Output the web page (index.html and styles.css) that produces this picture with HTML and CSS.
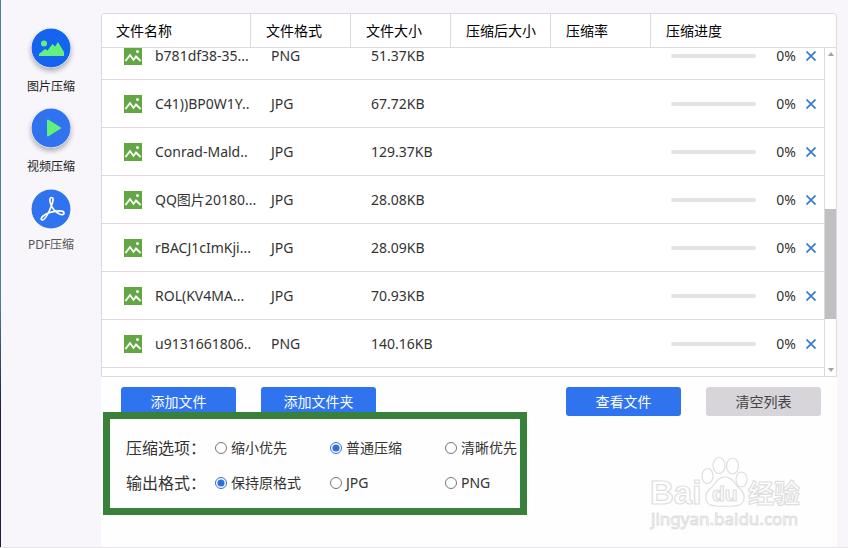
FILE: index.html
```
<!DOCTYPE html>
<html lang="zh-CN">
  <head>
    <meta charset="utf-8">
    <title>图片压缩</title>
    <link rel="stylesheet" href="styles.css">
  </head>
  <body>
    <!-- shared icons -->
    <svg class="sprite" aria-hidden="true">
      <symbol id="picture" viewBox="0 0 18 18">
        <rect width="18" height="18" fill="#62a744"/>
        <path d="M1.500 14L6 8l3.500 5L12 9.500l4.500 4.500" fill="none" stroke="#fff" stroke-width="1.800"/>
        <circle cx="13.500" cy="4.500" r="1.500" fill="#fff"/>
      </symbol>
      <symbol id="cross" viewBox="0 0 10 10">
        <path d="M.5.5l9 9M9.500.5l-9 9" fill="none" stroke="#3d7cd3" stroke-width="1.800"/>
      </symbol>
    </svg>

    <div class="app">
      <nav class="sidebar">
        <button type="button" class="tool">
          <svg class="tool-icon" viewBox="0 0 40 40">
            <circle cx="20" cy="20" r="19.500" fill="#1464f0"/>
            <circle cx="13" cy="15.500" r="3" fill="#63f07c"/>
            <path d="M8 28v-2l6-5 2.500 1.500 5-6.500 2.500 2.500 3-4.500 6 10v4z" fill="#63f07c"/>
          </svg>
          图片压缩
        </button>
        <button type="button" class="tool">
          <svg class="tool-icon" viewBox="0 0 40 40">
            <circle cx="20" cy="20" r="19.500" fill="#2f74ee"/>
            <path d="M17 12.500v15L29 20z" fill="#63f07c" stroke="#63f07c" stroke-width="2" stroke-linejoin="round"/>
          </svg>
          视频压缩
        </button>
        <button type="button" class="tool muted">
          <svg class="tool-icon" viewBox="0 0 40 40">
            <circle cx="20" cy="20" r="19.500" fill="#2f74ee"/>
            <path d="M20.500 8.500c-2 0-2 3-1 6 1.500 5 5 8.500 9 10.500 3 1.300 5 .3 4.500-1.300-.6-1.600-4-2-8-1.500-4.500.6-9 2-12.500 4.600-2.700 2-2.800 4-1.300 4.200 2 .2 5-4.500 7.300-9.500 2-4.500 3.500-8.500 3.500-11 0-1.300-.6-2-1.500-2z" fill="none" stroke="#fff" stroke-width="1.700"/>
          </svg>
          PDF压缩
        </button>
      </nav>

      <main class="main">
        <section class="files">
          <table class="head">
            <thead>
              <tr>
                <th class="col-name">文件名称</th>
                <th class="col">文件格式</th>
                <th class="col">文件大小</th>
                <th class="col">压缩后大小</th>
                <th class="col">压缩率</th>
                <th>压缩进度</th>
              </tr>
            </thead>
          </table>
          <div class="viewport">
            <table class="list">
              <colgroup>
                <col class="col-name"><col class="col"><col class="col"><col class="col"><col class="col"><col>
              </colgroup>
              <tbody>
                <tr>
                  <td><div class="name"><svg class="pic"><use href="#picture"/></svg>b781df38-35...</div></td>
                  <td>PNG</td><td>51.37KB</td><td></td><td></td>
                  <td><div class="progress"><span class="bar"></span><span class="percent">0%</span><button type="button" class="remove" aria-label="删除"><svg><use href="#cross"/></svg></button></div></td>
                </tr>
                <tr>
                  <td><div class="name"><svg class="pic"><use href="#picture"/></svg>C41))BP0W1Y..</div></td>
                  <td>JPG</td><td>67.72KB</td><td></td><td></td>
                  <td><div class="progress"><span class="bar"></span><span class="percent">0%</span><button type="button" class="remove" aria-label="删除"><svg><use href="#cross"/></svg></button></div></td>
                </tr>
                <tr>
                  <td><div class="name"><svg class="pic"><use href="#picture"/></svg>Conrad-Mald..</div></td>
                  <td>JPG</td><td>129.37KB</td><td></td><td></td>
                  <td><div class="progress"><span class="bar"></span><span class="percent">0%</span><button type="button" class="remove" aria-label="删除"><svg><use href="#cross"/></svg></button></div></td>
                </tr>
                <tr>
                  <td><div class="name"><svg class="pic"><use href="#picture"/></svg>QQ图片20180...</div></td>
                  <td>JPG</td><td>28.08KB</td><td></td><td></td>
                  <td><div class="progress"><span class="bar"></span><span class="percent">0%</span><button type="button" class="remove" aria-label="删除"><svg><use href="#cross"/></svg></button></div></td>
                </tr>
                <tr>
                  <td><div class="name"><svg class="pic"><use href="#picture"/></svg>rBACJ1cImKji...</div></td>
                  <td>JPG</td><td>28.09KB</td><td></td><td></td>
                  <td><div class="progress"><span class="bar"></span><span class="percent">0%</span><button type="button" class="remove" aria-label="删除"><svg><use href="#cross"/></svg></button></div></td>
                </tr>
                <tr>
                  <td><div class="name"><svg class="pic"><use href="#picture"/></svg>ROL(KV4MA...</div></td>
                  <td>JPG</td><td>70.93KB</td><td></td><td></td>
                  <td><div class="progress"><span class="bar"></span><span class="percent">0%</span><button type="button" class="remove" aria-label="删除"><svg><use href="#cross"/></svg></button></div></td>
                </tr>
                <tr>
                  <td><div class="name"><svg class="pic"><use href="#picture"/></svg>u9131661806..</div></td>
                  <td>PNG</td><td>140.16KB</td><td></td><td></td>
                  <td><div class="progress"><span class="bar"></span><span class="percent">0%</span><button type="button" class="remove" aria-label="删除"><svg><use href="#cross"/></svg></button></div></td>
                </tr>
              </tbody>
            </table>
            <div class="scrollbar">
              <svg class="arrow" viewBox="0 0 6 4"><path d="M0 4l3-4 3 4z" fill="#a3a3a3"/></svg>
              <div class="track"><div class="thumb"></div></div>
              <svg class="arrow" viewBox="0 0 6 4"><path d="M0 0l3 4 3-4z" fill="#a3a3a3"/></svg>
            </div>
          </div>
        </section>

        <div class="actions">
          <button type="button" class="btn">添加文件</button>
          <button type="button" class="btn">添加文件夹</button>
          <button type="button" class="btn push">查看文件</button>
          <button type="button" class="btn btn-clear">清空列表</button>
        </div>

        <form class="options">
          <div class="row" role="radiogroup" aria-labelledby="level">
            <span class="title" id="level">压缩选项：</span>
            <label><input type="radio" name="level">缩小优先</label>
            <label><input type="radio" name="level" checked>普通压缩</label>
            <label><input type="radio" name="level">清晰优先</label>
          </div>
          <div class="row" role="radiogroup" aria-labelledby="format">
            <span class="title" id="format">输出格式：</span>
            <label><input type="radio" name="format" checked>保持原格式</label>
            <label><input type="radio" name="format">JPG</label>
            <label><input type="radio" name="format">PNG</label>
          </div>
        </form>
      </main>

      <svg class="watermark" viewBox="0 0 156 76">
        <g fill="#fff" stroke="#dedede" stroke-width="1.200">
          <text class="wm-latin" x="2" y="49">Bai</text>
          <ellipse cx="59.500" cy="21" rx="5.500" ry="7.500"/>
          <ellipse cx="71" cy="10.500" rx="6" ry="8"/>
          <ellipse cx="84.500" cy="11" rx="6" ry="8"/>
          <ellipse cx="93.500" cy="24.500" rx="5.500" ry="7.500"/>
          <path d="M77 22c7 0 9 6 13 10 5 4 7 7 6 12-1 6-6 8-19 7-13 1-18-1-19-7-1-5 1-8 6-12 4-4 6-10 13-10z"/>
          <text class="wm-du" x="64" y="46">du</text>
          <text class="wm-cn" x="100" y="48">经验</text>
          <text class="wm-url" x="3" y="70">jingyan.baidu.com</text>
        </g>
      </svg>
    </div>
  </body>
</html>
```
FILE: styles.css
```
* {
  box-sizing: border-box;
}
body {
  margin: 0;
  background: #f8f6fb;
  color: #333;
  font: 14px/20px "Noto Sans", "Noto Sans CJK SC", sans-serif;
}
button {
  border: 0;
  padding: 0;
  background: none;
  color: inherit;
  font: inherit;
  cursor: pointer;
}
table {
  width: 100%;
  border-collapse: separate;
  border-spacing: 0;
  table-layout: fixed;
}
.sprite {
  display: none;
}
.app {
  position: relative;
  display: flex;
  min-height: 100vh;
  padding: 0 11px 0 1px;
  border-bottom: 1px solid #e6e4e8;
  /* desktop showing along the left edge */
  background: linear-gradient(#4b8290 55%, #1c2036 75%) left / 1px 100% no-repeat;
}

/* sidebar */
.sidebar {
  display: flex;
  flex-direction: column;
  align-items: center;
  gap: 11px;
  width: 100px;
  padding-top: 28px;
}
.tool {
  display: flex;
  flex-direction: column;
  align-items: center;
  gap: 9px;
  color: #222;
  font-size: 12px;
}
.tool-icon {
  width: 40px;
  height: 40px;
  border-radius: 50%;
  box-shadow: 0 3px 5px rgba(0, 0, 0, 0.3);
}
.muted {
  gap: 6px;
  padding-top: 1px;
  color: #555;
}
.muted .tool-icon {
  box-shadow: none;
}

/* file list */
.main {
  flex: 1;
  min-width: 0;
  background: linear-gradient(#f8f6fb 13px, #fefefe 13px);
  padding-top: 13px;
}
.files {
  border: 1px solid #dcd9df;
  border-radius: 3px 3px 0 0;
  background: #fff;
}
.head th {
  height: 34px;
  padding: 0 0 0 15px;
  border-right: 1px solid #dcd9df;
  border-bottom: 1px solid #dcd9df;
  color: #000;
  font-weight: normal;
  text-align: left;
}
.head th:first-child {
  padding-left: 14px;
}
.head th:last-child {
  border-right: 0;
}
.col-name {
  width: 149px;
}
.col {
  width: 100px;
}
.viewport {
  display: flex;
  height: 328px;
  overflow: hidden;
}
/* scrolled part of the way into the first row */
.list {
  flex: 1;
  margin-top: -16px;
  align-self: flex-start;
  line-height: 16px;
}
.list td {
  height: 48px;
  padding: 0 0 0 20px;
  border-bottom: 1px solid #dcd9df;
}
.list td:first-child {
  padding-left: 22px;
}
.name {
  display: flex;
  align-items: center;
  gap: 13px;
  white-space: nowrap;
}
.pic {
  flex: none;
  width: 18px;
  height: 18px;
}
.progress {
  display: flex;
  align-items: center;
  gap: 10px;
  padding-right: 8px;
}
.bar {
  flex: 1;
  height: 4px;
  margin-right: 10px;
  border-radius: 2px;
  background: #e5e3e8;
}
.remove {
  display: flex;
}
.remove svg {
  width: 10px;
  height: 10px;
}
.scrollbar {
  display: flex;
  flex-direction: column;
  align-items: center;
  width: 12px;
  padding: 4px 0;
  border-left: 1px solid #dcd9df;
}
.arrow {
  width: 6px;
  height: 4px;
}
.track {
  flex: 1;
  width: 100%;
  padding-top: 153px;
}
.thumb {
  height: 110px;
  background: #c1bfc2;
}

/* buttons */
.actions {
  display: flex;
  gap: 25px;
  padding: 10px 16px 0 20px;
}
.btn {
  width: 115px;
  height: 29px;
  border-radius: 3px;
  background: #2f74ee;
  color: #fff;
}
.push {
  margin-left: auto;
}
.btn-clear {
  background: #d7d5d9;
  color: #444;
}

/* options */
.options {
  position: relative;
  display: flex;
  flex-direction: column;
  gap: 15px;
  width: 424px;
  margin: -4px 0 0 2px;
  padding: 19px 0 15px 16px;
  border: 7px solid #37813a;
  background: #fefefe;
}
.row {
  display: grid;
  grid-template-columns: 89px 115px 115px 1fr;
  align-items: center;
  white-space: nowrap;
}
.title {
  font-size: 16px;
}
.row label {
  display: flex;
  align-items: center;
  gap: 4px;
}
.row input {
  width: 12px;
  height: 12px;
  margin: 0;
  accent-color: #2f6fd8;
}

.watermark {
  position: absolute;
  right: 44px;
  bottom: 16px;
  width: 156px;
  height: 76px;
}
.wm-latin {
  font: bold 33px "Liberation Sans", sans-serif;
}
.wm-du {
  font: bold 21px "Liberation Sans", sans-serif;
}
.wm-cn {
  font: bold 26px "Noto Sans CJK SC", sans-serif;
}
.wm-url {
  font: 17px "Noto Sans", sans-serif;
  stroke-width: 1px;
}
```
